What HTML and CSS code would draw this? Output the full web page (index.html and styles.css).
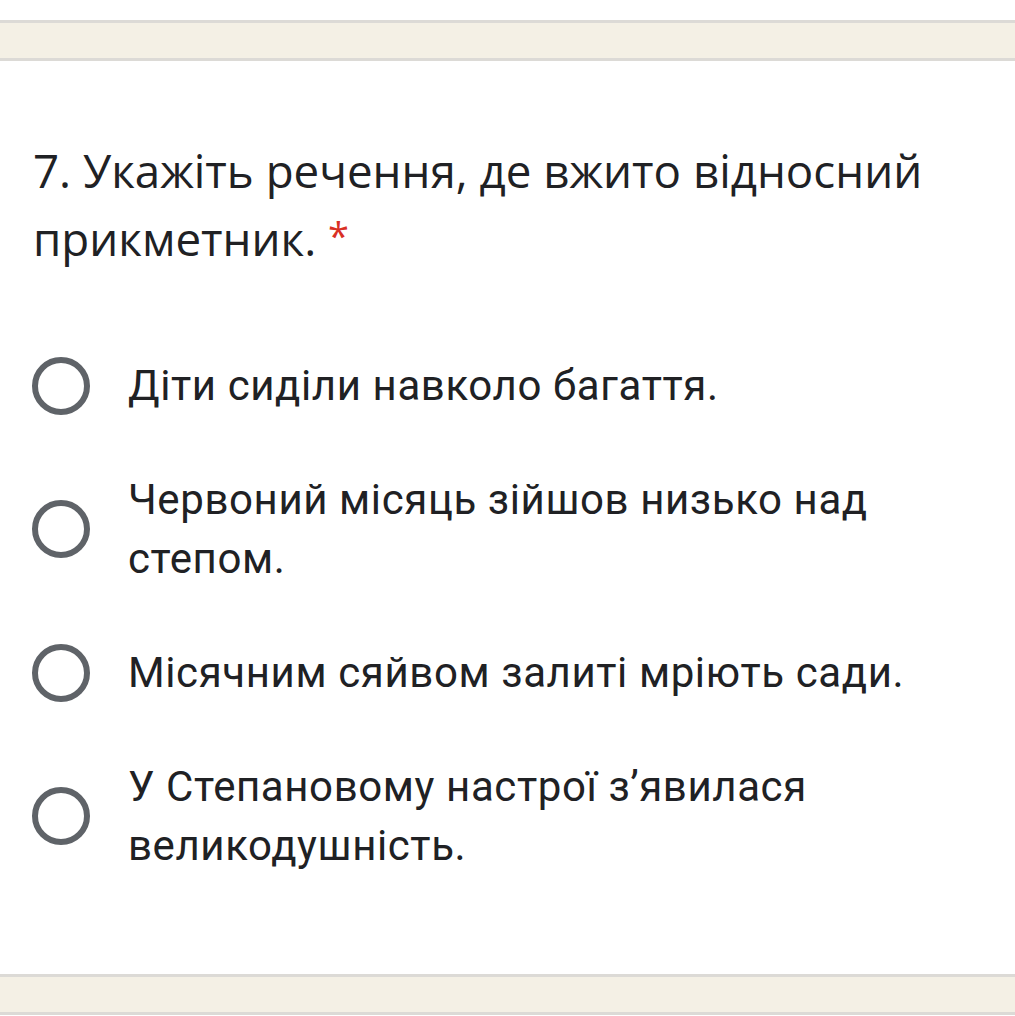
FILE: index.html
```html
<!DOCTYPE html>
<html lang="uk">
<head>
<meta charset="utf-8">
<link rel="stylesheet" href="styles.css">
</head>
<body>
<div class="prev-card"></div>
<div class="gap"></div>
<div class="card">
  <div class="title">7. Укажіть речення, де вжито відносний прикметник. <span class="req">*</span></div>
  <div class="options">
    <div class="option"><span class="radio"></span><span class="label">Діти сиділи навколо багаття.</span></div>
    <div class="option"><span class="radio"></span><span class="label">Червоний місяць зійшов низько над степом.</span></div>
    <div class="option"><span class="radio"></span><span class="label">Місячним сяйвом залиті мріють сади.</span></div>
    <div class="option"><span class="radio"></span><span class="label">У Степановому настрої з’явилася великодушність.</span></div>
  </div>
</div>
<div class="gap"></div>
<div class="next-card"></div>
</body>
</html>
```

FILE: styles.css
```css
html, body {
  margin: 0;
  padding: 0;
  background: #ffffff;
}
body {
  width: 1015px;
  overflow: hidden;
}
.prev-card {
  height: 20px;
  background: #fff;
  border-bottom: 3px solid #dcdad6;
}
.gap {
  height: 35px;
  background: #f4f0e5;
}
.card {
  background: #fff;
  border-top: 3px solid #dcdad6;
  border-bottom: 3px solid #dcdad6;
  height: 919px;
  box-sizing: border-box;
  padding: 75px 33px 0 33px;
}
.next-card {
  height: 4px;
  background: #fff;
  border-top: 3px solid #dcdad6;
}
.title {
  font-family: "Open Sans", sans-serif;
  font-size: 45.7px;
  line-height: 68px;
  color: #202124;
  letter-spacing: 0;
}
.req {
  display: inline-block;
  color: #d93025;
  font-size: 38px;
  vertical-align: top;
  line-height: 62px;
}
.options {
  margin-top: 84px;
  display: flex;
  flex-direction: column;
  gap: 55px;
}
.option {
  display: flex;
  align-items: center;
}
.radio {
  flex: none;
  width: 58px;
  height: 58px;
  box-sizing: border-box;
  border: 6px solid #5f6368;
  border-radius: 50%;
  margin-left: -1px;
}
.label {
  margin-left: 38px;
  font-family: Roboto, sans-serif;
  font-size: 42px;
  line-height: 59px;
  letter-spacing: 0.6px;
  color: #202124;
}
```
